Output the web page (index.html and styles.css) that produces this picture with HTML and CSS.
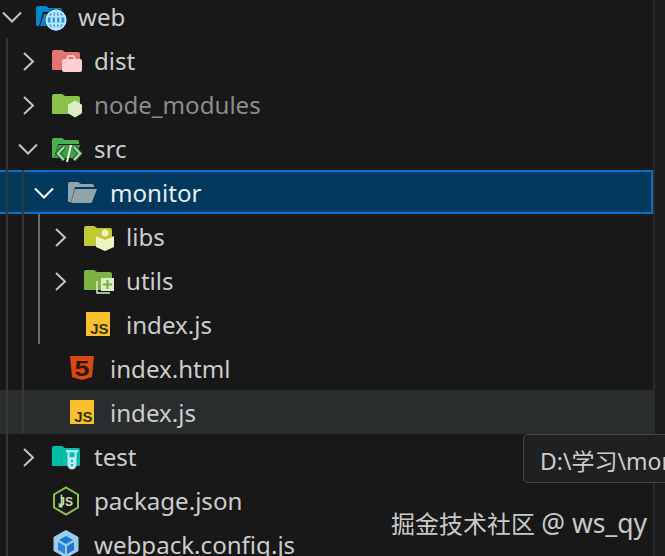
FILE: index.html
```html
<!DOCTYPE html>
<html lang="en">
<head>
  <meta charset="UTF-8" />
  <meta name="viewport" content="width=device-width, initial-scale=1.0"/>
  <title>Explorer</title>
  <link rel="stylesheet" href="styles.css">
</head>
<body>

<div class="tree">
  <div class="row depth-0">
    <svg class="twistie" viewBox="0 0 24 24"><path d="M3 7.500l9 9 9-9"/></svg>
    <svg class="icon" viewBox="0 0 32 32">
      <path fill="#0288d1" d="M1 7a2 2 0 0 1 2-2h8l3 2h11a2 2 0 0 1 2 2v2H8l-4 14H2a1 1 0 0 1-1-1z"/>
      <path fill="#0288d1" d="M9 13h18l-4 12H5z"/>
      <circle cx="21" cy="19" r="11" fill="#181818"/>
      <g fill="#2a93d5" stroke="#b3e5fc" stroke-width="2.200">
        <circle cx="21" cy="19" r="9.500"/>
        <ellipse cx="21" cy="19" rx="4.500" ry="9.500"/>
        <path d="M12 15.500h18M12 22.500h18M21 10v18"/>
      </g>
    </svg>
    <span class="label">web</span>
  </div>
  <div class="group">
    <div class="row depth-1">
      <svg class="twistie" viewBox="0 0 24 24"><path d="M8 4l9 8.500-9 8.500"/></svg>
      <svg class="icon" viewBox="0 0 32 32">
        <path fill="#e57373" d="M1 7a2 2 0 0 1 2-2h8l3 2h13a2 2 0 0 1 2 2v15a1 1 0 0 1-1 1H2a1 1 0 0 1-1-1z"/>
        <rect x="16.500" y="11" width="7" height="6" rx="2" fill="none" stroke="#ffcdd2" stroke-width="2"/>
        <rect x="11" y="14" width="20" height="13" rx="2" fill="#ffcdd2"/>
      </svg>
      <span class="label">dist</span>
    </div>
    <div class="row depth-1">
      <svg class="twistie" viewBox="0 0 24 24"><path d="M8 4l9 8.500-9 8.500"/></svg>
      <svg class="icon" viewBox="0 0 32 32">
        <path fill="#8bc34a" d="M1 7a2 2 0 0 1 2-2h8l3 2h13a2 2 0 0 1 2 2v15a1 1 0 0 1-1 1H2a1 1 0 0 1-1-1z"/>
        <path fill="#dcedc8" d="M24 11.500l7 4.200v8.600L24 28.500l-7-4.200v-8.600z"/>
      </svg>
      <span class="label dim">node_modules</span>
    </div>
    <div class="row depth-1">
      <svg class="twistie" viewBox="0 0 24 24"><path d="M3 7.500l9 9 9-9"/></svg>
      <svg class="icon" viewBox="0 0 32 32">
        <path fill="#4caf50" d="M1 7a2 2 0 0 1 2-2h8l3 2h12a2 2 0 0 1 2 2v2H7L3 25H2a1 1 0 0 1-1-1z"/>
        <path fill="#3f9f45" d="M7 12h22l-4 13H3z"/>
        <g fill="none" stroke="#1d5a22" stroke-width="4.500">
          <path d="M13 14l-6 6.500 6 6.500M23 14l6 6.500-6 6.500"/>
        </g>
        <g fill="none" stroke="#a5d6a7" stroke-width="2.500">
          <path d="M13 14l-6 6.500 6 6.500M23 14l6 6.500-6 6.500"/>
          <path stroke="#e8f5e9" stroke-width="2" d="M20 12l-4 17"/>
        </g>
      </svg>
      <span class="label">src</span>
    </div>
    <div class="group">
      <div class="row depth-2 selected">
        <svg class="twistie" viewBox="0 0 24 24"><path d="M3 7.500l9 9 9-9"/></svg>
        <svg class="icon" viewBox="0 0 32 32">
          <path fill="#90a4ae" d="M1 7a2 2 0 0 1 2-2h8l3 2h11a2 2 0 0 1 2 2v1H8l-4 15H2a1 1 0 0 1-1-1z"/>
          <path fill="#90a4ae" d="M8 12h22l-5 13a1 1 0 0 1-1 1H4z"/>
        </svg>
        <span class="label">monitor</span>
      </div>
      <div class="group bright">
        <div class="row depth-3">
          <svg class="twistie" viewBox="0 0 24 24"><path d="M8 4l9 8.500-9 8.500"/></svg>
          <svg class="icon" viewBox="0 0 32 32">
            <path fill="#c0ca33" d="M1 7a2 2 0 0 1 2-2h8l3 2h13a2 2 0 0 1 2 2v15a1 1 0 0 1-1 1H2a1 1 0 0 1-1-1z"/>
            <circle cx="22" cy="12" r="3.500" fill="#f0f4c3"/>
            <path fill="#f0f4c3" d="M13 15l9 4 9-4v11l-9 4-9-4z"/>
          </svg>
          <span class="label">libs</span>
        </div>
        <div class="row depth-3">
          <svg class="twistie" viewBox="0 0 24 24"><path d="M8 4l9 8.500-9 8.500"/></svg>
          <svg class="icon" viewBox="0 0 32 32">
            <path fill="#7cb342" d="M1 7a2 2 0 0 1 2-2h8l3 2h13a2 2 0 0 1 2 2v15a1 1 0 0 1-1 1H2a1 1 0 0 1-1-1z"/>
            <path fill="none" stroke="#dcedc8" stroke-width="1.500" d="M14 16v12h13"/>
            <rect x="18" y="13" width="13" height="13" fill="#dcedc8"/>
            <path fill="none" stroke="#7cb342" stroke-width="2.200" d="M24.500 15v9M20 19.500h9"/>
          </svg>
          <span class="label">utils</span>
        </div>
        <div class="row depth-3 leaf">
          <svg class="icon" viewBox="0 0 32 32">
            <rect x="3" y="3" width="24" height="24" fill="#fbc02d"/>
            <text class="js" x="25.500" y="25">JS</text>
          </svg>
          <span class="label">index.js</span>
        </div>
      </div>
      <div class="row depth-2 leaf">
        <svg class="icon" viewBox="0 0 32 32">
          <path fill="#d84a10" d="M3 3h24l-2 21-10 3-10-3z"/>
          <text class="five" x="15" y="22.500" textLength="15" lengthAdjust="spacingAndGlyphs">5</text>
        </svg>
        <span class="label">index.html</span>
      </div>
      <div class="row depth-2 leaf hover">
        <svg class="icon" viewBox="0 0 32 32">
          <rect x="3" y="3" width="24" height="24" fill="#fbc02d"/>
          <text class="js" x="25.500" y="25">JS</text>
        </svg>
        <span class="label">index.js</span>
      </div>
    </div>
    <div class="row depth-1">
      <svg class="twistie" viewBox="0 0 24 24"><path d="M8 4l9 8.500-9 8.500"/></svg>
      <svg class="icon" viewBox="0 0 32 32">
        <path fill="#00bfa5" d="M1 7a2 2 0 0 1 2-2h8l3 2h13a2 2 0 0 1 2 2v15a1 1 0 0 1-1 1H2a1 1 0 0 1-1-1z"/>
        <path fill="#b2ebf2" d="M15 9h12v2.500h-1.500V24a4.500 4.500 0 0 1-9 0V11.500H15z"/>
        <path fill="#00bfa5" d="M18.500 11.500h5V16h-5z"/>
        <path fill="#00bfa5" d="M20 19h2v2h-2zM20 23h2v2h-2z"/>
      </svg>
      <span class="label">test</span>
    </div>
    <div class="row depth-1 leaf">
      <svg class="icon" viewBox="0 0 32 32">
        <path fill="none" stroke="#8bc34a" stroke-width="2" d="M15 2.500l12 7v13l-12 7-12-7v-13z"/>
        <text class="node" x="22" y="21">JS</text>
        <path fill="none" stroke="#c5e1a5" stroke-width="1.500" d="M10.500 9.500V22l-3-1"/>
      </svg>
      <span class="label">package.json</span>
    </div>
    <div class="row depth-1 leaf">
      <svg class="icon" viewBox="0 0 32 32">
        <path fill="#9ccbf0" d="M15 1l12.500 7v14L15 29 2.500 22V8z"/>
        <path fill="#1976d2" d="M15 7l7 4-7 4-7-4z"/>
        <path fill="#2f86d6" d="M7 13l7 4v8l-7-4z"/>
        <path fill="#1f78cc" d="M23 13l-7 4v8l7-4z"/>
      </svg>
      <span class="label">webpack.config.js</span>
    </div>
  </div>
</div>

<div class="scrollbar"></div>

<div class="tooltip">D:\学习\monitor\index.js</div>
<div class="watermark">掘金技术社区 <span class="handle">@ ws_qy</span></div>

</body>
</html>
```

FILE: styles.css
```css
html, body {
  height: 100%;
}

body {
  margin: 0;
  display: flex;
  overflow: hidden;
  position: relative;
  font-family: "Noto Sans", "Noto Sans CJK SC", sans-serif;
  background: #181818;
  color: #cccccc;
}

.tree {
  width: 653px;
  flex: none;
  margin-top: -6px;
}

.scrollbar {
  flex: 1;
  background: #1c1c1c;
  border-left: 2px solid #2b2b2b;
}

.group {
  position: relative;
}

/* indent guides */
.group::before {
  content: "";
  position: absolute;
  top: 0;
  bottom: 0;
  border-left: 2px solid #363636;
  z-index: 1;
}

.tree > .group::before {
  left: 6px;
}

.tree > .group > .group::before {
  left: 22px;
}

.group.bright::before {
  left: 38px;
  bottom: 2px;
  border-left-color: #6a6a6a;
}

.row {
  height: 44px;
  display: flex;
  align-items: center;
  font-size: 24.1px;
}

.depth-0 { padding-left: 0; }
.depth-1 { padding-left: 16px; }
.depth-2 { padding-left: 32px; }
.depth-3 { padding-left: 48px; }

.depth-1.leaf { padding-left: 51px; }
.depth-2.leaf { padding-left: 67px; }
.depth-3.leaf { padding-left: 83px; }

.selected {
  box-sizing: border-box;
  background: #04395e;
  border: 2px solid #0a6ec4;
  border-left: none;
  color: #e6edf3;
}

.selected .twistie path {
  stroke: #ffffff;
}

.hover {
  background: #2a2d2e;
}

.twistie {
  width: 24px;
  height: 24px;
  flex: none;
  margin: 2px 11px 0 0;
}

.twistie path {
  fill: none;
  stroke: #c5c5c5;
  stroke-width: 2;
}

.icon {
  width: 32px;
  height: 32px;
  flex: none;
  margin: 2px 11px 0 0;
  overflow: visible;
}

.label {
  white-space: nowrap;
}

.dim {
  color: #8c8c8c;
}

.js {
  font: bold 15px "Liberation Sans", sans-serif;
  fill: #3a3006;
  text-anchor: end;
}

.five {
  font: bold 22px "Liberation Sans", sans-serif;
  fill: #33180a;
  text-anchor: middle;
}

.node {
  font: bold 12px "Liberation Sans", sans-serif;
  fill: #c5e1a5;
  text-anchor: end;
}

.tooltip {
  position: absolute;
  left: 523px;
  top: 434px;
  height: 45px;
  padding: 2px 16px 0;
  display: flex;
  align-items: center;
  white-space: nowrap;
  font-size: 23px;
  background: #202020;
  border: 1px solid #454545;
  border-radius: 5px;
}

.watermark {
  position: absolute;
  left: 391px;
  top: 506px;
  white-space: nowrap;
  font-size: 24px;
  line-height: 34px;
  color: #c9c9c9;
}

.handle {
  font-size: 26.5px;
}
```
